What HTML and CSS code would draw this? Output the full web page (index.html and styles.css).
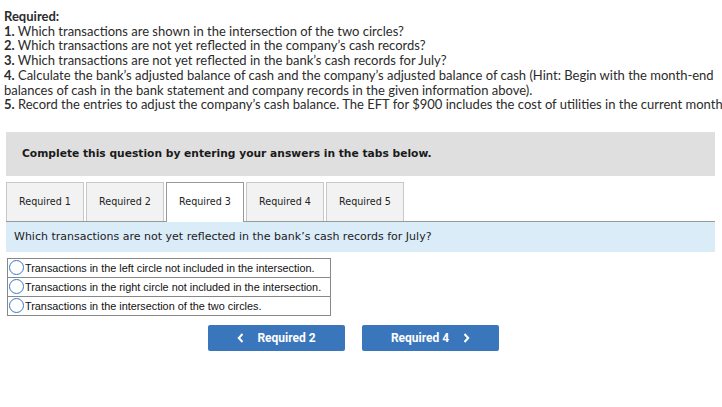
FILE: index.html
```html
<!DOCTYPE html>
<html>
<head>
<meta charset="utf-8">
<link rel="stylesheet" href="styles.css">
</head>
<body>
<div class="req">
  <div class="req-title">Required:</div>
  <div><b>1.</b> Which transactions are shown in the intersection of the two circles?</div>
  <div><b>2.</b> Which transactions are not yet reflected in the company’s cash records?</div>
  <div><b>3.</b> Which transactions are not yet reflected in the bank’s cash records for July?</div>
  <div class="wrap"><b>4.</b> Calculate the bank’s adjusted balance of cash and the company’s adjusted balance of cash (Hint: Begin with the month-end balances of cash in the bank statement and company records in the given information above).</div>
  <div><b>5.</b> Record the entries to adjust the company’s cash balance. The EFT for $900 includes the cost of utilities in the current month.</div>
</div>
<div class="main">
  <div class="banner">Complete this question by entering your answers in the tabs below.</div>
  <div class="tabs">
    <div class="tab">Required 1</div>
    <div class="tab">Required 2</div>
    <div class="tab active">Required 3</div>
    <div class="tab">Required 4</div>
    <div class="tab">Required 5</div>
  </div>
  <div class="question">Which transactions are not yet reflected in the bank’s cash records for July?</div>
  <div class="options">
    <label class="opt"><span class="radio"></span>Transactions in the left circle not included in the intersection.</label>
    <label class="opt"><span class="radio"></span>Transactions in the right circle not included in the intersection.</label>
    <label class="opt"><span class="radio"></span>Transactions in the intersection of the two circles.</label>
  </div>
  <div class="nav">
    <div class="btn"><svg class="chev l" width="7" height="10" viewBox="0 0 7 10"><polyline points="5.5,1 1.8,5 5.5,9" fill="none" stroke="#fff" stroke-width="2"/></svg>Required 2</div>
    <div class="btn">Required 4<svg class="chev r" width="7" height="10" viewBox="0 0 7 10"><polyline points="1.5,1 5.2,5 1.5,9" fill="none" stroke="#fff" stroke-width="2"/></svg></div>
  </div>
</div>
</body>
</html>
```
FILE: styles.css
```css
html, body { margin: 0; padding: 0; background: #fff; }
body { width: 722px; overflow: hidden; }
.req {
  font-family: Lato, "Open Sans", sans-serif;
  font-size: 13px;
  line-height: 14.7px;
  color: #2b2b2b;
  padding: 9px 0 0 4px;
  box-sizing: border-box;
  width: 722px;
  overflow: hidden;
}
.req div { white-space: nowrap; }
.req div.wrap { white-space: normal; width: 756px; }
.req-title, .req b { font-weight: 700; }
.main { padding: 0 7px 0 6px; margin-top: 20px; }
.banner {
  background: #dfdfdf;
  height: 44px;
  display: flex;
  align-items: center;
  padding-left: 16px;
  font-family: Verdana, "DejaVu Sans", sans-serif;
  font-weight: bold;
  font-size: 10.7px;
  color: #1a1a1a;
}
.tabs {
  display: flex;
  margin-top: 6px;
  border-bottom: 1px solid #999;
  height: 39px;
  gap: 2px;
}
.tab {
  width: 78px;
  height: 39px;
  box-sizing: border-box;
  border: 1px solid #c8c8c8;
  border-bottom: none;
  background: #f2f2f2;
  font-family: Verdana, "DejaVu Sans", sans-serif;
  font-size: 9.6px;
  color: #222;
  display: flex;
  align-items: center;
  justify-content: center;
}
.tab.active {
  background: #fff;
  border-color: #999;
  height: 40px;
  margin-bottom: -1px;
  padding-bottom: 1px;
}
.question {
  background: #dbecf9;
  height: 30px;
  display: flex;
  align-items: center;
  padding-left: 8px;
  font-family: Verdana, "DejaVu Sans", sans-serif;
  font-size: 11px;
  color: #222;
}
.options {
  margin: 6px 0 0 1px;
  width: 322px;
  border: 1px solid #888;
  border-bottom: none;
  font-family: "Liberation Sans", Arial, sans-serif;
  font-size: 10.85px;
  color: #111;
}
.opt {
  display: flex;
  align-items: center;
  height: 18px;
  border-bottom: 1px solid #888;
}
.radio {
  width: 15px;
  height: 15px;
  box-sizing: border-box;
  border: 1px solid #3a78c4;
  border-radius: 50%;
  margin: 0 1px 0 1px;
  background: #fff;
}
.nav {
  display: flex;
  justify-content: center;
  gap: 17px;
  margin-top: 9px;
  padding-right: 14px;
}
.btn {
  width: 137px;
  height: 26px;
  background: #3a76bb;
  border-radius: 2px;
  color: #fff;
  font-family: Roboto, sans-serif;
  font-weight: bold;
  font-size: 12px;
  display: flex;
  align-items: center;
  justify-content: center;
}
.chev.l { margin-right: 13px; }
.chev.r { margin-left: 14px; }
```
